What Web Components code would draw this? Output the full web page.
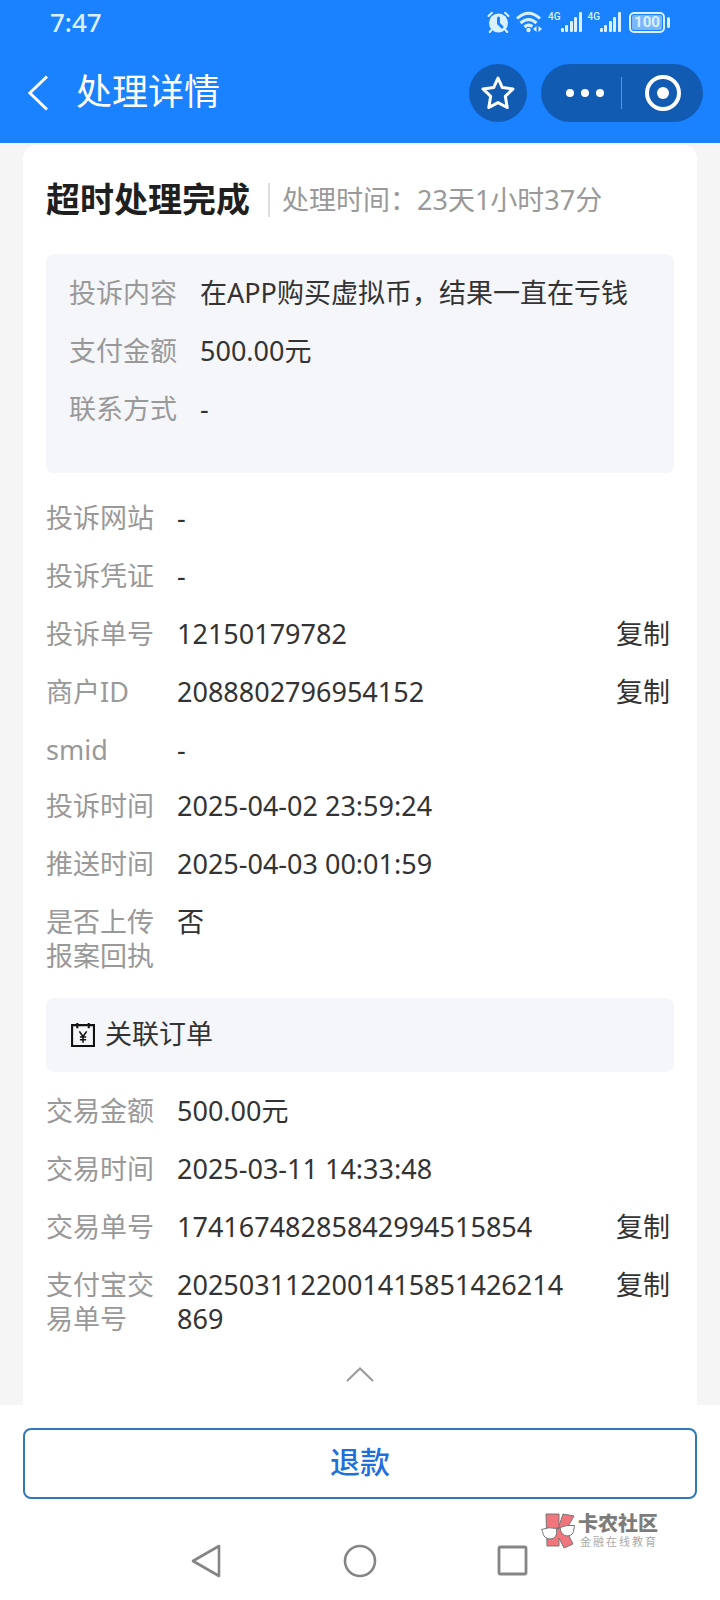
<!DOCTYPE html>
<html lang="zh-CN">
<head>
<meta charset="utf-8">
<meta name="viewport" content="width=device-width, initial-scale=1">
<title>处理详情</title>
<style>
  body {
    margin: 0;
    background: #fff;
    color: #333;
    font: 27px/34px "Noto Sans", "Noto Sans CJK SC", sans-serif;
  }
</style>
</head>
<body>
<complaint-page></complaint-page>

<script>
const define = (name, html) => {
  const template = document.createElement('template');
  template.innerHTML = html;
  customElements.define(name, class extends HTMLElement {
    constructor() {
      super();
      this.attachShadow({ mode: 'open' }).append(template.content.cloneNode(true));
    }
  });
};

define('signal-meter', `
  <style>
    :host { display: flex; align-items: flex-start; color: #d9f1ff; }
    span { font: 500 10px/10px Roboto, sans-serif; }
    svg { display: block; }
  </style>
  <span>4G</span>
  <svg width="21" height="21" viewBox="0 0 21 21" fill="currentColor">
    <rect x="0" y="16" width="3" height="4" rx="1"/><rect x="4" y="13" width="3" height="7" rx="1"/>
    <rect x="9" y="9" width="3" height="11" rx="1"/><rect x="13" y="5" width="3" height="15" rx="1"/>
    <rect x="18" y="0" width="3" height="20" rx="1"/>
  </svg>`);

define('status-bar', `
  <style>
    :host { display: flex; justify-content: space-between; align-items: center; height: 44px; padding: 0 50px; color: #d9f1ff; }
    time { font-size: 26px; font-weight: 500; }
    .icons { display: flex; gap: 6px; align-items: center; }
    svg { display: block; }
    .battery { display: flex; align-items: center; gap: 2px; margin-left: 2px; }
    .cell { box-sizing: border-box; width: 36px; height: 21px; border: 2px solid; border-radius: 5px; padding: 1px; }
    .cell b { display: block; background: #79b8ff; border-radius: 2px; font: 700 15px/15px Roboto, sans-serif; text-align: center; }
    .battery i { width: 3px; height: 11px; border-radius: 2px; background: currentColor; }
  </style>
  <time>7:47</time>
  <div class="icons">
    <svg width="23" height="22" viewBox="0 0 23 22" fill="none" stroke="currentColor" stroke-width="2" stroke-linecap="round">
      <circle cx="11.5" cy="12" r="9.5" fill="currentColor" stroke="none"/>
      <path d="M1.5 5 5 1.8M21.5 5 18 1.8M4.5 19 2.8 21M18.5 19 20.2 21"/>
      <path d="M11.5 7V12.5L15 16" stroke="#1a82ff" stroke-width="3"/>
    </svg>
    <svg width="26" height="22" viewBox="0 0 26 22" fill="none" stroke="currentColor" stroke-width="3">
      <path d="M1 7.5Q12.5-3 24 7.5M4.5 12Q12.5 5 20.5 12M8.5 16Q12.5 12.5 16.5 15.5"/>
      <circle cx="12.5" cy="19" r="2.2" fill="currentColor" stroke="none"/>
      <path d="M20.5 15V21L17 18ZM22.5 15V21L26 18Z" fill="currentColor" stroke="none"/>
    </svg>
    <signal-meter></signal-meter>
    <signal-meter></signal-meter>
    <div class="battery"><div class="cell"><b>100</b></div><i></i></div>
  </div>`);

define('title-bar', `
  <style>
    :host { display: flex; align-items: center; height: 97px; padding: 0 17px 2px 28px; color: #fff; }
    button { display: flex; align-items: center; justify-content: center; padding: 0; border: 0; background: none; color: inherit; }
    h1 { flex: 1; margin: 0 0 0 28px; padding-bottom: 2px; font-size: 36px; font-weight: 400; line-height: 40px; }
    svg { display: block; }
    .star { width: 58px; height: 58px; border-radius: 50%; background: #125bb3; }
    .capsule { display: flex; align-items: center; width: 162px; height: 58px; margin-left: 14px; border-radius: 29px; background: #125bb3; }
    .capsule button { flex: 1; height: 100%; }
    .capsule .more { flex: none; width: 80px; padding-left: 8px; }
    .capsule hr { width: 1px; height: 32px; margin: 0; border: 0; background: #5e94d4; }
  </style>
  <button aria-label="返回"><svg width="20" height="36" viewBox="0 0 20 36" fill="none" stroke="currentColor" stroke-width="3"><path d="M19 1.5 1.8 18 19 34.5"/></svg></button>
  <h1>处理详情</h1>
  <button class="star" aria-label="收藏"><svg width="36" height="36" viewBox="0 0 36 36" fill="none" stroke="currentColor" stroke-width="3" stroke-linejoin="round"><path d="M18 3 22.3 12.6 33 13.9 25.3 21.3 27.2 32.5 18 27.6 8.8 32.5 10.7 21.3 3 13.9 13.7 12.6Z"/></svg></button>
  <div class="capsule">
    <button class="more" aria-label="更多"><svg width="38" height="10" viewBox="0 0 38 10" fill="currentColor"><circle cx="4" cy="5" r="4"/><circle cx="19" cy="5" r="4"/><circle cx="34" cy="5" r="4"/></svg></button>
    <hr>
    <button aria-label="关闭"><svg width="38" height="38" viewBox="0 0 38 38" fill="none" stroke="currentColor" stroke-width="4"><circle cx="19" cy="19" r="16"/><circle cx="19" cy="19" r="6" fill="currentColor" stroke="none"/></svg></button>
  </div>`);

define('info-row', `
  <style>
    :host { display: flex; align-items: flex-start; }
    .label { flex: none; width: 108px; margin-right: 23px; color: #999; }
    .value { flex: 1; min-width: 0; word-break: break-all; }
    button { display: none; flex: none; margin: 0 4px 0 45px; padding: 0; border: 0; background: none; color: inherit; font: inherit; }
    :host([copy]) button { display: block; }
  </style>
  <div class="label"><slot name="label"></slot></div>
  <div class="value"><slot></slot></div>
  <button>复制</button>`);

define('row-group', `
  <style>:host { display: flex; flex-direction: column; gap: 24px; }</style>
  <slot></slot>`);

define('tinted-panel', `
  <style>:host { display: block; padding: 22px 23px; border-radius: 8px; background: #f5f6fa; }</style>
  <slot></slot>`);

define('order-heading', `
  <style>
    :host { display: flex; align-items: center; gap: 10px; height: 30px; }
    h3 { margin: 0; padding-bottom: 2px; font-size: 27px; font-weight: 400; line-height: 30px; }
    svg { display: block; margin-left: 1px; }
  </style>
  <svg width="25" height="25" viewBox="0 0 24 24" fill="none" stroke="#111" stroke-width="2">
    <path d="M2 2H23V22H2ZM7 0V5M18 0V5"/>
    <path d="M9 8 12.5 13 16 8M12.5 13V19M9.5 13.5H15.5M9.5 16H15.5" stroke-width="1.5"/>
  </svg>
  <h3><slot></slot></h3>`);

define('case-card', `
  <style>
    :host { display: block; padding: 38px 23px 23px; border-radius: 14px 14px 0 0; background: #fff; }
    header { display: flex; align-items: center; height: 34px; margin-bottom: 37px; }
    h2 { margin: 0; padding: 0 18px 2px 0; color: #1f1f1f; font-size: 34px; font-weight: 700; line-height: 34px; }
    header p { margin: 0; padding-left: 12px; border-left: 2px solid #ddd; color: #999; }
    .contact { padding-bottom: 47px; }
    .details { margin-top: 28px; }
    .times { margin-top: 22px; }
    .order { margin-top: 25px; }
    .trade { margin-top: 22px; }
    .fold { display: block; margin: 24px auto 0; padding: 7px 0 0; border: 0; background: none; }
    .fold svg { display: block; }
  </style>
  <header><h2>超时处理完成</h2><p>处理时间：23天1小时37分</p></header>
  <tinted-panel class="contact">
    <row-group>
      <info-row><span slot="label">投诉内容</span>在APP购买虚拟币，结果一直在亏钱</info-row>
      <info-row><span slot="label">支付金额</span>500.00元</info-row>
      <info-row><span slot="label">联系方式</span>-</info-row>
    </row-group>
  </tinted-panel>
  <row-group class="details">
    <info-row><span slot="label">投诉网站</span>-</info-row>
    <info-row><span slot="label">投诉凭证</span>-</info-row>
    <info-row copy><span slot="label">投诉单号</span>12150179782</info-row>
    <info-row copy><span slot="label">商户ID</span>2088802796954152</info-row>
    <info-row><span slot="label">smid</span>-</info-row>
  </row-group>
  <row-group class="times">
    <info-row><span slot="label">投诉时间</span>2025-04-02 23:59:24</info-row>
    <info-row><span slot="label">推送时间</span>2025-04-03 00:01:59</info-row>
    <info-row><span slot="label">是否上传报案回执</span>否</info-row>
  </row-group>
  <tinted-panel class="order"><order-heading>关联订单</order-heading></tinted-panel>
  <row-group class="trade">
    <info-row><span slot="label">交易金额</span>500.00元</info-row>
    <info-row><span slot="label">交易时间</span>2025-03-11 14:33:48</info-row>
    <info-row copy><span slot="label">交易单号</span>17416748285842994515854</info-row>
    <info-row copy><span slot="label">支付宝交易单号</span>2025031122001415851426214869</info-row>
  </row-group>
  <button class="fold" aria-label="收起"><svg width="28" height="15" viewBox="0 0 28 15" fill="none" stroke="#999" stroke-width="2"><path d="M1 14 14 1.5 27 14"/></svg></button>`);

define('action-footer', `
  <style>
    :host { display: block; padding: 23px 23px 0; background: #fff; }
    button { display: block; width: 100%; height: 71px; padding: 0 0 4px; border: 2px solid #2f79b8; border-radius: 8px; background: #fff; color: #1f70dc; font: inherit; font-size: 30px; font-weight: 500; }
  </style>
  <button>退款</button>`);

define('system-nav', `
  <style>
    :host { display: flex; justify-content: center; align-items: center; gap: 119px; height: 76px; padding: 24px 0 2px; }
    button { padding: 0; border: 0; background: none; color: #858585; }
    svg { display: block; }
  </style>
  <button aria-label="后退"><svg width="34" height="34" viewBox="0 0 34 34" fill="none" stroke="currentColor" stroke-width="2.6" stroke-linejoin="round"><path d="M29 2V32L3 17Z"/></svg></button>
  <button aria-label="主页"><svg width="34" height="34" viewBox="0 0 34 34" fill="none" stroke="currentColor" stroke-width="2.6"><circle cx="17" cy="17" r="15"/></svg></button>
  <button aria-label="最近任务"><svg width="34" height="34" viewBox="0 0 34 34" fill="none" stroke="currentColor" stroke-width="2.8"><rect x="3" y="3" width="27" height="27" rx="1.5"/></svg></button>`);

define('community-mark', `
  <style>
    :host { display: flex; align-items: center; gap: 3px; color: #7c7c7c; }
    svg { display: block; }
    b { display: block; font-size: 20px; font-weight: 900; line-height: 20px; }
    small { display: block; padding: 1px 0 0 2px; color: #aaa; font-size: 11px; line-height: 14px; letter-spacing: 2px; }
  </style>
  <svg width="34" height="36" viewBox="0 0 34 36" stroke="#777" stroke-width="1">
    <path d="M5 1H18V13L22 1 33 3 25 17 32 31 23 35 18 25V33H6Z" fill="#f0757c"/>
    <path d="M.5 16.5Q8 13.5 15.5 15.5 17 26 9 26 2.5 26 1.5 18.5ZM19 14.5Q26 11.5 33.5 12.5L33 15Q33 23 26 23 20 22.5 19 14.5Z" fill="#fff"/>
    <path d="M15.5 15.5 19 14.5" fill="none" stroke-width="2"/>
  </svg>
  <div><b>卡农社区</b><small>金融在线教育</small></div>`);

define('complaint-page', `
  <style>
    :host { display: block; position: relative; }
    .top { background: #1a82ff; }
    main { padding: 2px 23px 0; background: #f5f5f5; }
    community-mark { position: absolute; right: 62px; bottom: 52px; }
  </style>
  <div class="top"><status-bar></status-bar><title-bar></title-bar></div>
  <main><case-card></case-card></main>
  <action-footer></action-footer>
  <system-nav></system-nav>
  <community-mark></community-mark>`);
</script>
</body>
</html>
